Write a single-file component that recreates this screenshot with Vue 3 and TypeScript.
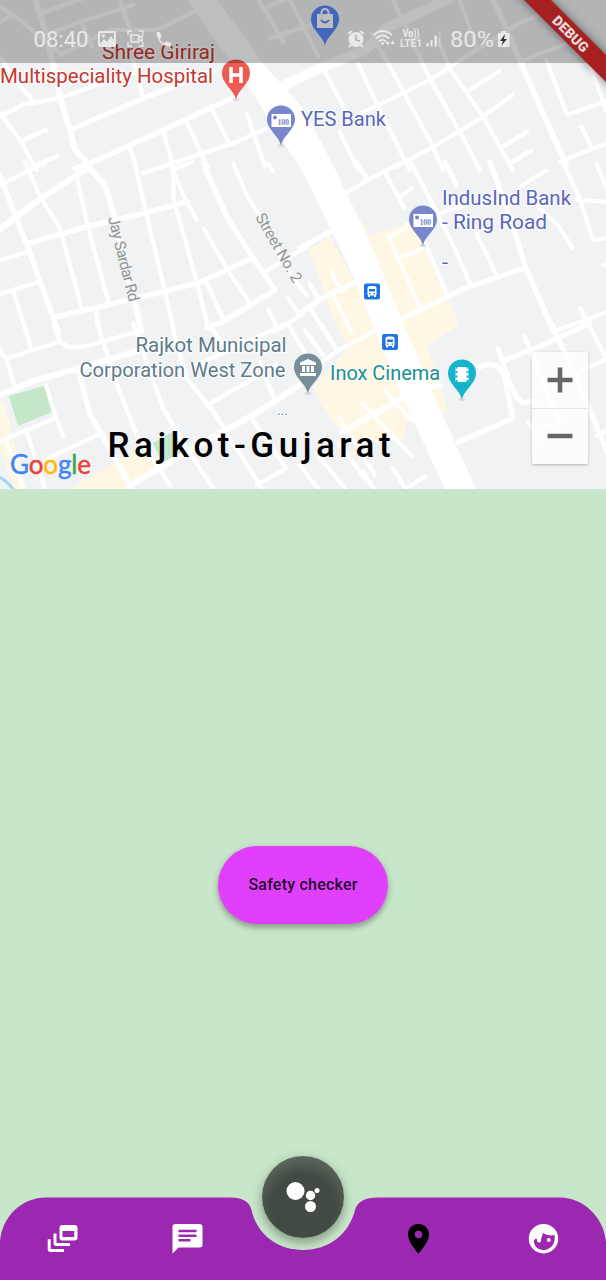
<script setup lang="ts">
interface Road {
  d: string
  w?: number
}
interface Tile {
  x: number
  y: number
  roads: Road[]
}

// Street geometry, drawn in tile units (three units per pixel).
const tiles: Tile[] = [
  {
    x: 0,
    y: 0,
    roads: [
      { d: 'M0,350 L70,314 L185,293 L270,262 L410,215' },
      { d: 'M0,170 L50,245 L100,305' },
      { d: 'M105,-10 L140,110 L180,290 L210,390 L225,450 L268,495', w: 18 },
      { d: 'M210,390 L430,295 L640,212', w: 15 },
      { d: 'M225,505 L270,490 L490,390 L700,292', w: 16 },
      { d: 'M0,340 L60,420 L110,510' },
      { d: 'M60,425 L138,390' },
      { d: 'M95,500 L170,470' },
      { d: 'M430,520 L600,462 L700,430 L800,385' },
      { d: 'M400,180 L430,295' },
      { d: 'M388,440 L410,500' },
      { d: 'M490,395 L520,500' },
      { d: 'M558,362 L622,500' },
      { d: 'M632,318 L690,435' },
      { d: 'M740,340 L795,500' },
      { d: 'M0,65 L40,45 L175,155' },
      { d: 'M0,20 L40,48' },
      { d: 'M120,40 L250,-5' },
      { d: 'M130,110 L240,65 L400,15' },
      { d: 'M180,165 L330,90 L470,90 L590,30' },
      { d: 'M245,70 L275,140' },
      { d: 'M360,0 L400,120' },
      { d: 'M775,0 L800,40 L850,125' },
      { d: 'M800,22 L860,-5' },
      { d: 'M810,115 L930,75' },
      { d: 'M870,0 L912,80' },
    ],
  },
  {
    x: 303,
    y: 0,
    roads: [
      { d: 'M-90,272 L50,205 L190,148 L250,84 L340,43 L440,-5', w: 30 },
      { d: 'M60,205 L130,335' },
      { d: 'M165,190 L230,330 L320,510' },
      { d: 'M205,100 L285,245 L385,430 L420,510' },
      { d: 'M300,60 L375,225 L500,450 L530,510' },
      { d: 'M405,120 L440,205 L540,350 L630,510' },
      { d: 'M175,340 L380,240 L520,150 L650,70 L730,35' },
      { d: 'M280,500 L400,435 L540,350 L630,284' },
      { d: 'M500,270 L590,212' },
      { d: 'M600,440 L672,395' },
      { d: 'M620,490 L685,452' },
      { d: 'M570,-5 L650,180 L720,340 L790,495', w: 17 },
      { d: 'M730,180 L760,260 L792,345 L909,303' },
      { d: 'M650,185 L820,120' },
      { d: 'M835,380 L865,440' },
      { d: 'M770,485 L915,428' },
      { d: 'M860,190 L909,330' },
      { d: 'M110,395 L165,510' },
      { d: 'M270,0 L300,65' },
      { d: 'M470,0 L520,140' },
      { d: 'M0,80 L45,170' },
    ],
  },
  {
    x: 0,
    y: 165,
    roads: [
      { d: 'M0,60 L90,15 L135,-5' },
      { d: 'M0,192 L120,102 L268,6', w: 18 },
      { d: 'M0,30 L45,150 L85,250 L120,350 L175,500', w: 16 },
      { d: 'M75,-10 L120,95 L180,190 L245,430' },
      { d: 'M265,5 L315,60 L345,160 L425,500', w: 18 },
      { d: 'M230,35 L265,190 L325,410' },
      { d: 'M85,235 L260,185 L430,145 L562,110', w: 16 },
      { d: 'M403,-10 L440,150 L495,380 L522,500' },
      { d: 'M0,285 L85,260' },
      { d: 'M0,386 L120,350' },
      { d: 'M40,380 L78,500' },
      { d: 'M170,455 L410,400 L600,352 L755,280', w: 16 },
      { d: 'M520,15 L520,100 L590,350 L625,490' },
      { d: 'M510,-5 L550,90 L590,165' },
      { d: 'M515,15 L575,-8' },
      { d: 'M612,192 L680,310 L750,415' },
      { d: 'M610,-5 L680,155 L760,280 L825,375 L660,475 L620,485', w: 16 },
      { d: 'M700,-5 L740,90 L775,145 L870,330 L920,390' },
      { d: 'M795,320 L920,245' },
      { d: 'M620,355 L672,465' },
      { d: 'M287,432 L300,500' },
      { d: 'M805,435 L835,495' },
      { d: 'M865,400 L898,450' },
      { d: 'M910,447 L820,500' },
      { d: 'M805,-5 L818,18' },
    ],
  },
  {
    x: 303,
    y: 165,
    roads: [
      { d: 'M120,90 L200,42 L310,-15' },
      { d: 'M160,-10 L190,40' },
      { d: 'M245,20 L305,130' },
      { d: 'M290,98 L325,70' },
      { d: 'M325,-5 L390,120 L455,250 L503,362' },
      { d: 'M425,-10 L460,60' },
      { d: 'M310,180 L480,122' },
      { d: 'M360,220 L432,388' },
      { d: 'M520,205 L582,332' },
      { d: 'M560,-10 L620,150 L665,300 L752,500', w: 16 },
      { d: 'M655,62 L730,16' },
      { d: 'M778,-10 L830,100 L870,225 L912,220' },
      { d: 'M820,105 L912,110' },
      { d: 'M705,125 L765,180 L808,248' },
      { d: 'M-10,250 L85,198', w: 16 },
      { d: 'M310,190 L257,217 L290,290 L350,425' },
      { d: 'M290,278 L355,252' },
      { d: 'M290,465 L480,372 L668,308', w: 16 },
      { d: 'M-10,445 L60,398 L160,350', w: 16 },
      { d: 'M85,320 L115,380' },
      { d: 'M90,390 L145,500' },
      { d: 'M22,430 L65,500' },
      { d: 'M20,355 L45,400' },
      { d: 'M880,-5 L909,65' },
      { d: 'M900,300 L915,297' },
      { d: 'M832,430 L855,480' },
      { d: 'M750,500 L915,440' },
    ],
  },
  {
    x: 0,
    y: 325,
    roads: [
      { d: 'M20,100 L180,50 L205,66 L250,65 L415,20' },
      { d: 'M0,210 L100,168 L270,120 L440,70', w: 18 },
      { d: 'M-5,70 L18,100 L45,188' },
      { d: 'M72,-5 L95,75' },
      { d: 'M160,0 L182,52' },
      { d: 'M290,-10 L325,100 L355,190 L410,330 L510,480' },
      { d: 'M235,135 L270,270 L300,320 L395,490', w: 16 },
      { d: 'M138,180 L165,270 L190,335' },
      { d: 'M0,348 L165,280' },
      { d: 'M80,320 L135,490' },
      { d: 'M145,400 L302,325' },
      { d: 'M400,-5 L450,140 L490,250 L560,370 L640,490' },
      { d: 'M520,20 L560,160 L640,260 L690,340 L785,490' },
      { d: 'M385,485 L520,405 L640,335 L760,270 L915,170', w: 18 },
      { d: 'M620,242 L830,120' },
      { d: 'M755,280 L858,430 L770,480' },
      { d: 'M780,110 L820,215' },
      { d: 'M590,120 L860,-5' },
      { d: 'M635,10 L670,60' },
      { d: 'M865,0 L920,90' },
      { d: 'M20,350 L70,490' },
    ],
  },
  {
    x: 303,
    y: 325,
    roads: [
      { d: 'M-10,160 L100,80 L230,10' },
      { d: 'M55,0 L105,80' },
      { d: 'M5,15 L60,90' },
      { d: 'M115,322 L300,218 L410,180', w: 16 },
      { d: 'M110,280 L165,365 L215,450' },
      { d: 'M178,235 L325,392' },
      { d: 'M245,198 L325,285' },
      { d: 'M530,125 L555,118 L583,122 L603,150 L630,280 L465,352', w: 16 },
      { d: 'M585,70 L620,170 L640,215 L660,234 L700,226', w: 15 },
      { d: 'M600,108 L720,60 L860,-5', w: 16 },
      { d: 'M665,35 L710,150 L770,290 L720,310' },
      { d: 'M745,-5 L830,180 L920,400', w: 15 },
      { d: 'M855,-5 L915,110' },
      { d: 'M730,185 L915,100' },
      { d: 'M880,332 L915,315' },
      { d: 'M675,292 L720,350' },
      { d: 'M-10,420 L48,495' },
      { d: 'M40,385 L130,495' },
      { d: 'M110,360 L185,460' },
      { d: 'M180,440 L215,495' },
      { d: 'M270,430 L310,495' },
      { d: 'M310,490 L365,455' },
    ],
  },
]

const pin = 'M0,40 C-1.5,30 -14,24 -14,13 A14,13.6 0 1 1 14,13 C14,24 1.5,30 0,40 Z'
const buses = [
  { x: 364, y: 283.5 },
  { x: 382, y: 334 },
]
const banks = [
  { x: 281, y: 106 },
  { x: 423, y: 206 },
]
</script>

<template>
  <main class="screen">
    <section class="map">
      <svg class="canvas" viewBox="0 0 606 489" width="606" height="489">
        <rect width="606" height="489" fill="#f0f2f4" />
        <g fill="#fef7e3">
          <path d="M309,249 L330,236 L380,331 L400,400 L340,430 L318,400 L345,374 L349,350 L330,310 Z" />
          <path d="M357,215 L370,235 L413,222 L446,293 L459,325 L427,345 L448,410 L430,425 L390,320 Z" />
          <path d="M313,388 L350,345 L400,338 L425,375 L402,440 L350,442 Z" />
          <path d="M0,402 L4,401 L26,489 L14,489 L0,450 Z" />
          <path d="M70,489 L112,464 L140,450 L158,465 L128,489 Z M120,464 L143,458 L153,471 L134,483 Z" />
        </g>
        <path d="M9,396 L44,386 L52,412 L18,426 Z M153,443 L174,431 L184,452 L162,463 Z" fill="#c3e7c7" />
        <g v-for="(t, i) in tiles" :key="i" :transform="`translate(${t.x} ${t.y}) scale(0.33333)`">
          <path
            v-for="(r, j) in t.roads"
            :key="j"
            :d="r.d"
            :stroke-width="r.w ?? 12.5"
            fill="none"
            stroke="#fff"
            stroke-linejoin="round"
            stroke-linecap="round"
          />
        </g>
        <path
          d="M187,0 L215,40 L248,85 L270,122 L303,172 L345,258 L373,325 L400,392 L445,489 L476,489 L440,410 L404,325 L368,238 L333,165 L303,108 L265,66 L240,30 L217,0 Z"
          fill="#fff"
        />
        <path d="M-2,476 Q8,482 14,490" fill="none" stroke="#a5d8f0" stroke-width="3" />

        <g class="labels">
          <g class="halo" fill="#c5392f">
            <text x="102" y="58.500" textLength="113" lengthAdjust="spacingAndGlyphs">Shree Giriraj</text>
            <text x="0" y="83" textLength="213" lengthAdjust="spacingAndGlyphs">Multispeciality Hospital</text>
          </g>
          <g class="halo" fill="#5b66bd">
            <text x="301" y="126" textLength="85" lengthAdjust="spacingAndGlyphs">YES Bank</text>
            <text x="442" y="204.500" textLength="129" lengthAdjust="spacingAndGlyphs">IndusInd Bank</text>
            <text x="442" y="229" textLength="105" lengthAdjust="spacingAndGlyphs">- Ring Road</text>
            <text x="442" y="269" textLength="6" lengthAdjust="spacingAndGlyphs">-</text>
          </g>
          <g class="halo" fill="#5f7b89">
            <text x="135.500" y="351.500" textLength="151" lengthAdjust="spacingAndGlyphs">Rajkot Municipal</text>
            <text x="79.500" y="376.500" textLength="206" lengthAdjust="spacingAndGlyphs">Corporation West Zone</text>
            <text x="277" y="415" textLength="11" class="dots">...</text>
          </g>
          <text class="halo" x="330" y="379.500" textLength="110" lengthAdjust="spacingAndGlyphs" fill="#168f99">Inox Cinema</text>
          <text class="street" textLength="87" transform="translate(108 218) rotate(76)">Jay Sardar Rd</text>
          <text class="street" textLength="77" transform="translate(255 217) rotate(60)">Street No. 2</text>
        </g>

        <g transform="translate(325 6)">
          <path :d="pin" fill="#568aff" />
          <path d="M-8,8 H8 V22 H-8 Z" fill="#fff" />
          <path d="M-3.500,9 V6.500 a3.500,3.500 0 0 1 7,0 V9" fill="none" stroke="#fff" stroke-width="2" />
          <path d="M-4,14 q4,5 8,0" fill="none" stroke="#568aff" stroke-width="2" />
        </g>
        <g transform="translate(236 60)">
          <ellipse cy="39.500" rx="3.500" ry="1.500" fill="#ddd" />
          <path :d="pin" fill="#ed5c52" />
          <path d="M-5,7 V23 M5,7 V23 M-5,15 H5" fill="none" stroke="#fff" stroke-width="3.500" />
        </g>
        <g v-for="b in banks" :key="b.x" :transform="`translate(${b.x} ${b.y})`">
          <ellipse cy="39.500" rx="3.500" ry="1.500" fill="#ddd" />
          <path :d="pin" fill="#7886cb" />
          <rect x="-9.500" y="8" width="19.500" height="13" fill="#fff" />
          <circle cx="-6" cy="11.500" r="2" fill="#7886cb" />
          <text class="note" x="-3.500" y="18.500" textLength="11.500">100</text>
        </g>
        <g transform="translate(308 354)">
          <ellipse cy="39.500" rx="3.500" ry="1.500" fill="#ddd" />
          <path :d="pin" fill="#788f9b" />
          <path
            d="M0,5 L8,8.500 V11 H-8 V8.500 Z M-6,12 h3 v6 h-3 Z M-1.500,12 h3 v6 h-3 Z M3,12 h3 v6 h-3 Z M-8,19 H8 V22 H-8 Z"
            fill="#fff"
          />
        </g>
        <g transform="translate(462 360)">
          <ellipse cy="39.500" rx="3.500" ry="1.500" fill="#ddd" />
          <path :d="pin" fill="#12b5cb" />
          <rect x="-6.500" y="7" width="13" height="15" fill="#fff" />
          <path d="M-5.500,6.500 V23 M5.500,6.500 V23" stroke="#12b5cb" stroke-width="2" stroke-dasharray="2 2.500" />
        </g>
        <g v-for="b in buses" :key="b.x" :transform="`translate(${b.x} ${b.y})`">
          <rect width="16" height="16" rx="2" fill="#2173e8" />
          <path
            d="M3.500,4.500 Q3.500,2.500 6,2.500 H10 Q12.500,2.500 12.500,4.500 V11.500 H12 V13.500 H10 V12 H6 V13.500 H4 V11.500 H3.500 Z"
            fill="#fff"
          />
          <path d="M5,5.500 H11 V8 H5 Z M5,9.500 h1.500 v1.200 h-1.500 Z M9.500,9.500 h1.500 v1.200 h-1.500 Z" fill="#2173e8" />
        </g>
      </svg>

      <div class="google">
        <span class="b">G</span><span class="r">o</span><span class="y">o</span><span class="b">g</span><span class="g">l</span><span class="r">e</span>
      </div>
      <h1 class="place">Rajkot-Gujarat</h1>
      <div class="zoom">
        <button class="zoom-btn" aria-label="Zoom in">
          <svg width="26" height="26" viewBox="0 0 26 26"><path d="M.5,13 H25.500 M13,.5 V25.500" stroke="#666" stroke-width="4.500" /></svg>
        </button>
        <button class="zoom-btn" aria-label="Zoom out">
          <svg width="26" height="26" viewBox="0 0 26 26"><path d="M.5,13 H25.500" stroke="#666" stroke-width="4.500" /></svg>
        </button>
      </div>

      <svg class="status" width="606" height="63" viewBox="0 0 606 63">
        <rect width="606" height="63" fill="#000" fill-opacity=".255" />
        <g fill="#e9e9e9">
          <text x="33.500" y="47" font-size="22" textLength="55" lengthAdjust="spacingAndGlyphs">08:40</text>
          <path fill-rule="evenodd" d="M100,31 H114 Q116,31 116,33 V45 Q116,47 114,47 H100 Q98,47 98,45 V33 Q98,31 100,31 Z M100,33 V44 L104,39 L107,42 L111,36 L114,40 V33 Z" />
          <circle cx="103.500" cy="36" r="1.500" />
          <path d="M128,35 V31 H132 M139,31 H143 V35 M143,42 V46 H139 M132,46 H128 V42" fill="none" stroke="#e9e9e9" stroke-width="1.300" />
          <path d="M131,35 H138.500 V42 H131 Z M138.500,38 L142,36 V41 L138.500,39.500" fill="none" stroke="#e9e9e9" stroke-width="1.500" />
          <path d="M156.500,32 L160,32 L161.500,37 L159.500,39 Q161,42 164,43.500 L166,41.500 L171,43 V46.500 Q158,47 156.500,32 Z" />
          <circle cx="356" cy="39.500" r="7.500" />
          <path d="M348,34 L352,31 M364,34 L360,31 M351,45 L349,47 M361,45 L363,47" stroke="#e9e9e9" stroke-width="2" />
          <path d="M356,35 V40 L360,41" fill="none" stroke="#aaa" stroke-width="1.500" />
          <path d="M373.500,35 Q382.500,27 392,35 M376,38.500 Q382.500,32.500 389,38.500 M379,41.500 Q382.500,38.500 386,41.500" fill="none" stroke="#e9e9e9" stroke-width="2" />
          <circle cx="382.500" cy="43.500" r="1.500" />
          <path d="M385.500,42 h4.400 l-2.200,3.400 Z M390.500,44 h4.400 l-2.200,-3.400 Z" />
          <text x="402.500" y="37" class="tiny" textLength="17" lengthAdjust="spacingAndGlyphs">Vo))</text>
          <text x="400" y="47" class="tiny" textLength="22" lengthAdjust="spacingAndGlyphs">LTE1</text>
          <path d="M426.500,43 h2 v3.500 h-2 Z M430.500,40 h2 v6.500 h-2 Z M434.500,35.500 h2.300 v11 h-2.300 Z" />
          <path d="M439,31 h1.500 v15.500 h-1.500 Z" opacity=".4" />
          <text x="450" y="47" font-size="22" textLength="44" lengthAdjust="spacingAndGlyphs">80%</text>
          <path d="M501,31 h5 v2 h3.500 V47 H498 V33 h3 Z" />
          <path d="M505,34 L500,41 H503 L501,46 L507,39 H504 Z" fill="#333" />
        </g>
      </svg>
    </section>

    <section class="body">
      <button class="checker">Safety checker</button>
    </section>

    <nav class="nav">
      <svg class="bar" width="606" height="90" viewBox="0 0 606 90">
        <path
          d="M0,90 V52 C2,26 22,7.500 46,7.500 H231 C242,7.500 250,12 251.500,20 C257,44 277,60 303,60 C329,60 349,44 355,20 C357,12 365,7.500 378,7.500 H560 C583,7.500 604,27 606,52 V90 Z"
          fill="#9c27b0"
        />
        <g fill="#fff">
          <path
            fill-rule="evenodd"
            d="M62.500,35 H74.500 Q77.500,35 77.500,38 V47.500 Q77.500,50.500 74.500,50.500 H62.500 Q59.500,50.500 59.500,47.500 V38 Q59.500,35 62.500,35 Z M62.500,41 V47 H74.300 V41 Z"
          />
          <path d="M53.500,43.500 H56.500 V53 H70 V56 H56.500 Q53.500,56 53.500,53 Z" />
          <path d="M47.700,49.300 H50.700 V59 H64 V62 H50.700 Q47.700,62 47.700,59 Z" />
          <path
            fill-rule="evenodd"
            d="M175.500,34 H199.500 Q202.500,34 202.500,37 V54.500 Q202.500,57.500 199.500,57.500 H178.500 L172.500,63.500 V37 Q172.500,34 175.500,34 Z M178.500,39.700 V42.300 H196.500 V39.700 Z M178.500,44.500 V47 H196.500 V44.500 Z M178.500,49 V51.500 H190.500 V49 Z"
          />
        </g>
        <path
          fill-rule="evenodd"
          d="M418.500,34 C412.500,34 408,38.500 408,44.500 C408,52.500 418.500,63.500 418.500,63.500 C418.500,63.500 429,52.500 429,44.500 C429,38.500 424.500,34 418.500,34 Z M418.500,40.700 a3.800,3.800 0 1 1 0,7.600 a3.800,3.800 0 1 1 0,-7.600 Z"
        />
        <circle cx="543.500" cy="48.700" r="14.700" fill="#fff" />
        <path d="M533.800,51.500 C534,49 536.500,48 537,49.500 Q538,52 540.500,51 L543,43 Q548,46.500 554.500,45 C556,53 551,60 543.500,60 C538.500,60 534.500,56.500 533.800,51.500 Z" fill="#9c27b0" />
        <circle cx="548.800" cy="50" r="2" fill="#fff" />
        <circle cx="539" cy="50.500" r="2" fill="#fff" />
      </svg>
      <button class="fab" aria-label="Assistant">
        <svg width="82" height="82" viewBox="0 0 82 82" fill="#fff">
          <circle cx="33.500" cy="35" r="9" />
          <circle cx="48.500" cy="39.500" r="4.700" />
          <circle cx="48.500" cy="50.500" r="5.500" />
          <circle cx="55" cy="34.500" r="2.500" />
        </svg>
      </button>
    </nav>
    <div class="debug"><span>DEBUG</span></div>
  </main>
</template>

<style>
body {
  margin: 0;
}
</style>

<style scoped>
.screen {
  position: relative;
  display: flex;
  flex-direction: column;
  width: 606px;
  height: 1280px;
  overflow: hidden;
  background: #c8e6c9;
  font-family: Roboto, sans-serif;
}
button {
  border: 0;
  padding: 0;
  font-family: inherit;
}
svg {
  display: block;
}
.map {
  position: relative;
  height: 489px;
}
.labels text {
  font-family: Roboto, "Open Sans", sans-serif;
  font-size: 20.5px;
}
.halo {
  stroke: #fff;
  stroke-width: 2.5px;
  stroke-opacity: 0.8;
  stroke-linejoin: round;
  paint-order: stroke;
}
.labels .dots {
  font-size: 14px;
}
.labels .street {
  font-size: 15.5px;
  fill: #919496;
  stroke: #f3f4f5;
  stroke-width: 2px;
  paint-order: stroke;
}
.note {
  font: 700 8px "Liberation Serif", serif;
  fill: #7886cb;
}
.status {
  position: absolute;
  inset: 0 auto auto 0;
}
.tiny {
  font-size: 10px;
  font-weight: 700;
}
.google {
  position: absolute;
  left: 10px;
  top: 448px;
  display: flex;
  font: 400 26px/32px Lato, sans-serif;
  letter-spacing: -0.2px;
  -webkit-text-stroke: 0.5px;
  text-shadow: 0 0 2px #fff;
}
.b { color: #4285f4; }
.r { color: #ea4335; }
.y { color: #fbbc05; }
.g { color: #34a853; }
.place {
  position: absolute;
  left: 107.5px;
  top: 425px;
  margin: 0;
  color: #000;
  font-size: 35px;
  line-height: 42px;
  font-weight: 500;
  letter-spacing: 4.5px;
  white-space: nowrap;
}
.zoom {
  position: absolute;
  left: 532px;
  top: 352px;
  width: 56px;
  height: 112px;
  display: flex;
  flex-direction: column;
  background: rgba(255, 255, 255, 0.78);
  border-radius: 2px;
  box-shadow: 0 1px 3px rgba(0, 0, 0, 0.25);
}
.zoom-btn {
  flex: 1;
  display: grid;
  place-items: center;
  background: none;
}
.zoom-btn + .zoom-btn {
  border-top: 1px solid #e6e6e6;
}
.body {
  flex: 1;
  display: flex;
  justify-content: center;
  align-items: center;
}
.checker {
  width: 170px;
  height: 78px;
  border-radius: 39px;
  background: #e040fb;
  color: rgba(0, 0, 0, 0.87);
  font-size: 16px;
  font-weight: 500;
  letter-spacing: 0.22px;
  box-shadow: 0 4px 5px rgba(0, 0, 0, 0.2), 0 2px 8px rgba(0, 0, 0, 0.14);
}
.nav {
  position: absolute;
  left: 0;
  bottom: 0;
  height: 90px;
}
.fab {
  position: absolute;
  left: 262px;
  top: -34px;
  width: 82px;
  height: 82px;
  border-radius: 50%;
  background: radial-gradient(circle at 50% 62%, #424b42 0 48%, #4b554c 60%, #5a685c 78%);
  box-shadow: 0 5px 9px rgba(0, 0, 0, 0.24), 0 2px 14px rgba(0, 0, 0, 0.12);
}
.debug {
  position: absolute;
  right: -71px;
  top: 24px;
  width: 212px;
  height: 19px;
  display: flex;
  align-items: center;
  justify-content: center;
  transform: rotate(45deg);
  background: #a61f21;
  box-shadow: 0 0 10px rgba(0, 0, 0, 0.5);
  color: #e8dada;
  font-size: 14px;
  font-weight: 900;
}
</style>
